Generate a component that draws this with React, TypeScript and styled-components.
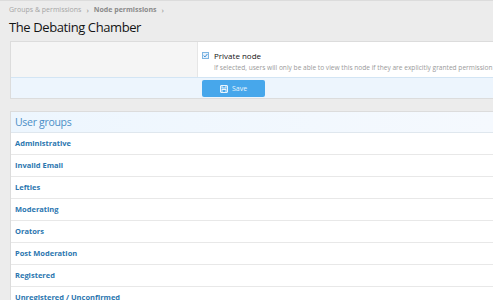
import styled, { createGlobalStyle } from "styled-components";

const GlobalStyle = createGlobalStyle`
  html, body {
    margin: 0;
    padding: 0;
    background: #ececec;
    font-family: "Open Sans", "Noto Sans", sans-serif;
    overflow: hidden;
  }
`;

const Page = styled.div`
  border-top: 1px solid #dcdcdc;
  padding-left: 10px;
`;

const Breadcrumb = styled.div`
  display: flex;
  align-items: center;
  gap: 5px;
  font-size: 7px;
  margin-left: -1px;
  height: 17px;
`;

const Crumb = styled.span<{ current?: boolean }>`
  font-weight: ${(p) => (p.current ? 700 : 400)};
  color: ${(p) => (p.current ? "#8a8a8a" : "#a5a5a5")};
`;

const Sep = styled.span`
  font-size: 8px;
  color: #8c8c8c;
`;

const Title = styled.h1`
  margin: 0 0 0 -1px;
  font-size: 13px;
  letter-spacing: -0.4px;
  font-weight: 400;
  color: #141414;
  height: 18px;
  line-height: 18px;
`;

const Block = styled.div`
  margin-top: 5px;
  background: #fff;
  border: 1px solid #dcdcdc;
  border-right: none;
`;

const FormRow = styled.div`
  display: flex;
  height: 35px;
`;

const LabelCol = styled.div`
  flex-shrink: 0;
  width: 186px;
  background: #f5f5f5;
  border-right: 1px solid #e6e6e6;
`;

const InputCol = styled.div`
  flex: 1;
  min-width: 0;
  padding: 9px 0 0 4px;
  white-space: nowrap;
  overflow: hidden;
`;

const CheckLine = styled.div`
  display: flex;
  align-items: center;
  gap: 5px;
  font-size: 8px;
  color: #141414;
  height: 8px;
`;

const Box = styled.span`
  flex-shrink: 0;
  width: 5px;
  height: 5px;
  border: 1px solid #7fb6e2;
  background: #e8f2fb;
  display: inline-flex;
  align-items: center;
  justify-content: center;
`;

const Hint = styled.div`
  margin: 4px 0 0 12px;
  font-size: 6.6px;
  color: #9a9a9a;
`;

const SubmitRow = styled.div`
  border-top: 1px solid #d3e5f4;
  background: #edf5fd;
  height: 20px;
  padding-left: 191px;
  display: flex;
  align-items: flex-start;
`;

const SaveButton = styled.button`
  width: 63px;
  height: 17px;
  border: none;
  border-radius: 2px;
  background: #47a7eb;
  color: #eaf5fd;
  font-family: inherit;
  font-size: 7px;
  display: flex;
  align-items: center;
  justify-content: center;
  gap: 4px;
  padding: 0;
  margin-top: 2px;
`;

const GroupBlock = styled.div`
  margin-top: 12px;
  background: #fff;
  border: 1px solid #dcdcdc;
  border-right: none;
`;

const GroupHeader = styled.h2`
  margin: 0;
  height: 20px;
  line-height: 20px;
  padding-left: 4px;
  font-size: 10.5px;
  letter-spacing: -0.3px;
  font-weight: 400;
  color: #4a8ec6;
  background: linear-gradient(to right, #edf6fe, #f5f9fe);
  border-bottom: 1px solid #dfe7ee;
`;

const GroupRow = styled.div`
  height: 21px;
  line-height: 21px;
  padding-left: 4px;
  font-size: 7.5px;
  font-weight: 700;
  color: #2b76af;
  border-bottom: 1px solid #e8e8e8;
`;

const groups = [
  "Administrative",
  "Invalid Email",
  "Lefties",
  "Moderating",
  "Orators",
  "Post Moderation",
  "Registered",
  "Unregistered / Unconfirmed",
];

function SaveIcon() {
  return (
    <svg width="8" height="8" viewBox="0 0 8 8" fill="none" stroke="#eaf5fd" strokeWidth="1">
      <rect x="0.5" y="0.5" width="7" height="7" rx="0.5" />
      <rect x="2" y="0.5" width="4" height="2.5" />
      <rect x="2" y="4.5" width="4" height="3" />
    </svg>
  );
}

export default function App() {
  return (
    <>
      <GlobalStyle />
      <Page>
        <Breadcrumb>
          <Crumb>Groups &amp; permissions</Crumb>
          <Sep>›</Sep>
          <Crumb current>Node permissions</Crumb>
          <Sep>›</Sep>
        </Breadcrumb>
        <Title>The Debating Chamber</Title>
        <Block>
          <FormRow>
            <LabelCol />
            <InputCol>
              <CheckLine>
                <Box>
                  <svg width="5" height="5" viewBox="0 0 5 5" fill="none" stroke="#3d8fd6" strokeWidth="1">
                    <path d="M0.6 2.6 L2 3.9 L4.4 1" />
                  </svg>
                </Box>
                Private node
              </CheckLine>
              <Hint>
                If selected, users will only be able to view this node if they are explicitly granted permission
                to do so.
              </Hint>
            </InputCol>
          </FormRow>
          <SubmitRow>
            <SaveButton>
              <SaveIcon />
              Save
            </SaveButton>
          </SubmitRow>
        </Block>
        <GroupBlock>
          <GroupHeader>User groups</GroupHeader>
          {groups.map((g) => (
            <GroupRow key={g}>{g}</GroupRow>
          ))}
        </GroupBlock>
      </Page>
    </>
  );
}
